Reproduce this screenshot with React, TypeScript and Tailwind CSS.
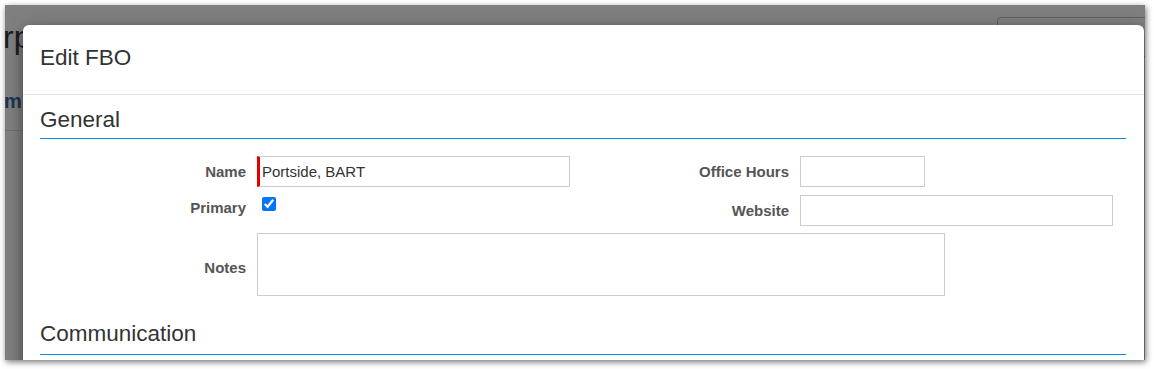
import React from "react";

export default function App() {
  return (
    <div className="w-[1154px] h-[369px] bg-white pt-[5px] pl-[5px] font-['Liberation_Sans',Arial,sans-serif]">
      <div className="relative w-[1140px] h-[355px] overflow-hidden bg-[#7f7f7f] shadow-[1px_2px_6px_rgba(0,0,0,0.55)]">
        {/* page behind the backdrop */}
        <div className="flex h-full">
          <div className="w-[18px] shrink-0 flex flex-col overflow-hidden">
            <div className="mt-[16px] ml-[-2px] text-[32px] leading-[32px] text-[#1a1a1a] whitespace-nowrap">
              rp
            </div>
            <div className="mt-[38px] ml-[-1px] text-[20px] leading-[20px] font-bold text-[#1b3552] whitespace-nowrap">
              m
            </div>
            <div className="mt-[19px] h-px bg-[#6f6f6f]" />
          </div>
          <div className="ml-auto mt-[12px] mr-[-20px] w-[168px] h-[40px] border border-[#5f5f5f] rounded-[4px]" />
        </div>

        {/* modal */}
        <div className="absolute left-[18px] top-[20px] w-[1121px] h-[360px] bg-white rounded-[6px] shadow-[0_5px_15px_rgba(0,0,0,0.5)]">
          <div className="h-[70px] border-b border-[#e5e5e5] pl-[17px] pt-[21px]">
            <h4 className="text-[22.5px] leading-[24px] text-[#333]">Edit FBO</h4>
          </div>
          <div className="pl-[17px] pr-[18px]">
            <div className="pt-[13px] pb-[6px] border-b border-[#1b87e6] text-[22.5px] leading-[24px] text-[#333]">
              General
            </div>

            <div className="mt-[17px] grid grid-cols-[206px_313px_208px_1fr] gap-x-[11px] gap-y-[8px]">
              <label className="h-[31px] flex items-center justify-end text-[15px] leading-[17px] font-bold text-[#555]">
                Name
              </label>
              <input
                readOnly
                value="Portside, BART"
                className="h-[31px] w-[313px] border border-[#ccc] border-l-[3px] border-l-[#e60000] pl-[2px] text-[15px] text-[#333] outline-none"
              />
              <label className="h-[31px] flex items-center justify-end text-[15px] leading-[17px] font-bold text-[#555]">
                Office Hours
              </label>
              <input readOnly className="h-[31px] w-[125px] border border-[#ccc] outline-none" />

              <label className="h-[31px] flex items-start justify-end pt-[4px] text-[15px] leading-[17px] font-bold text-[#555]">
                Primary
              </label>
              <div className="h-[31px] flex items-start">
                <input
                  type="checkbox"
                  defaultChecked
                  className="w-[14px] h-[14px] mt-[2px] ml-[5px] accent-[#0075ff]"
                />
              </div>
              <label className="h-[31px] flex items-center justify-end text-[15px] leading-[17px] font-bold text-[#555]">
                Website
              </label>
              <input readOnly className="h-[31px] w-[313px] border border-[#ccc] outline-none" />
            </div>

            <div className="mt-[7px] grid grid-cols-[206px_1fr] gap-x-[11px]">
              <label className="pt-[26px] text-right text-[15px] leading-[17px] font-bold text-[#555]">
                Notes
              </label>
              <textarea
                readOnly
                className="w-[688px] h-[63px] border border-[#ccc] resize-none outline-none block"
              />
            </div>

            <div className="mt-[26px] pb-[8px] border-b border-[#1b87e6] text-[22.5px] leading-[24px] text-[#333]">
              Communication
            </div>
          </div>
        </div>
      </div>
    </div>
  );
}
